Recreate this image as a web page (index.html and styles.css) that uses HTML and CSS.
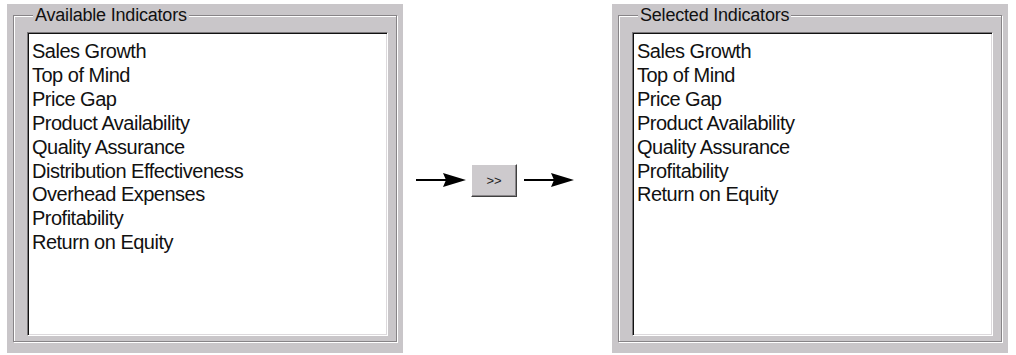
FILE: index.html
```html
<!DOCTYPE html>
<html lang="en">
<head>
    <meta charset="UTF-8">
    <meta name="viewport" content="width=device-width, initial-scale=1.0">
    <title>Indicators</title>
    <link rel="stylesheet" href="styles.css">
</head>
<body>
    <div id="container">
        <div class="panel">
            <fieldset class="group">
                <legend>Available Indicators</legend>
                <ul class="listbox">
                    <li>Sales Growth</li>
                    <li>Top of Mind</li>
                    <li>Price Gap</li>
                    <li>Product Availability</li>
                    <li>Quality Assurance</li>
                    <li>Distribution Effectiveness</li>
                    <li>Overhead Expenses</li>
                    <li>Profitability</li>
                    <li>Return on Equity</li>
                </ul>
            </fieldset>
        </div>

        <div class="transfer">
            <svg class="arrow" width="50" height="16" viewBox="0 0 50 16">
                <rect x="0" y="7" width="30" height="2" fill="#000"/>
                <polygon points="27,1 50,8 27,15 30,8" fill="#000"/>
            </svg>
            <button class="move">&gt;&gt;</button>
            <svg class="arrow" width="50" height="16" viewBox="0 0 50 16">
                <rect x="0" y="7" width="30" height="2" fill="#000"/>
                <polygon points="27,1 50,8 27,15 30,8" fill="#000"/>
            </svg>
        </div>

        <div class="panel">
            <fieldset class="group">
                <legend>Selected Indicators</legend>
                <ul class="listbox">
                    <li>Sales Growth</li>
                    <li>Top of Mind</li>
                    <li>Price Gap</li>
                    <li>Product Availability</li>
                    <li>Quality Assurance</li>
                    <li>Profitability</li>
                    <li>Return on Equity</li>
                </ul>
            </fieldset>
        </div>
    </div>
</body>
</html>
```

FILE: styles.css
```css
body {
    margin: 0;
    background-color: #ffffff;
    font-family: "Liberation Sans", Arial, sans-serif;
}
#container {
    display: flex;
    align-items: center;
    padding: 4px 0 0 7px;
}
.panel {
    width: 396px;
    height: 349px;
    box-sizing: border-box;
    background-color: #c9c6c9;
    padding: 1px 6px 0 6px;
}
.group {
    margin: 0;
    padding: 7px 8px 5px 13px;
    border: 1px solid #878487;
    box-shadow: inset 1px 1px #ffffff, 1px 1px #ffffff;
}
.group legend {
    margin-left: 6px;
    padding: 0 2px;
    background-color: #c9c6c9;
    font-size: 18px;
    line-height: 20px;
    letter-spacing: -0.2px;
    color: #111;
}
.listbox {
    list-style: none;
    margin: 0;
    width: 361px;
    height: 304px;
    box-sizing: border-box;
    padding: 7px 4px 5px 4px;
    background-color: #ffffff;
    border: 1px solid;
    border-color: #7b787b #ffffff #ffffff #7b787b;
    box-shadow: inset 1px 1px #111111, inset -1px -1px #dcd9dc;
    font-size: 20px;
    line-height: 23.9px;
    letter-spacing: -0.5px;
    color: #111;
}
.transfer {
    display: flex;
    align-items: center;
    width: 209px;
    padding: 3px 0 0 13px;
    box-sizing: border-box;
}
.arrow {
    display: block;
}
.move {
    width: 46px;
    height: 33px;
    margin: 0 7px 0 5px;
    padding: 0;
    background-color: #cdcacd;
    border: 1px solid;
    border-color: #ffffff #404040 #404040 #ffffff;
    box-shadow: inset -1px -1px #8a878a;
    font-family: "Liberation Sans", Arial, sans-serif;
    font-size: 13px;
    color: #222;
}
```
